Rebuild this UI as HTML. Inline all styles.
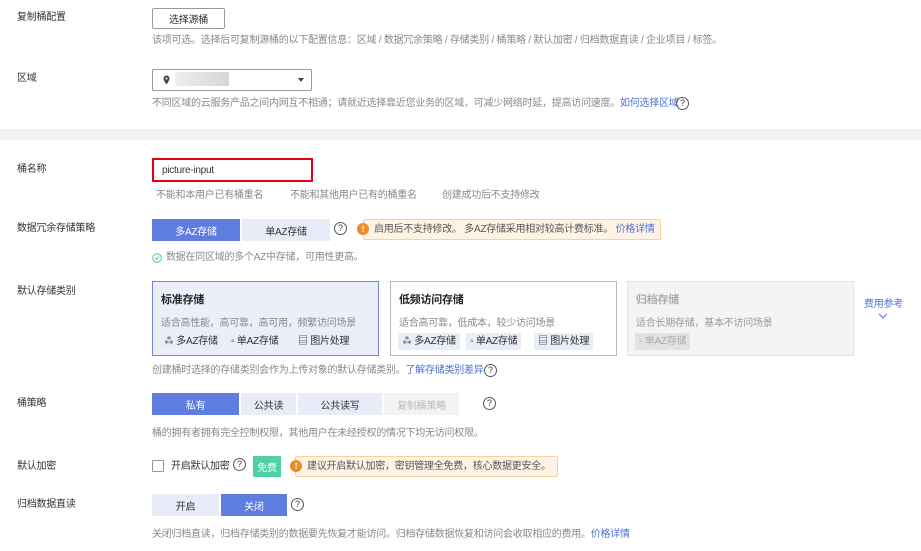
<!DOCTYPE html><html><head><meta charset="utf-8"><style>
*{margin:0;padding:0;box-sizing:border-box}
body{width:921px;height:551px;background:#fff;font-family:"Liberation Sans","Noto Sans CJK SC",sans-serif;font-size:10px;color:#333;position:relative;overflow:hidden;letter-spacing:-0.25px}
.a{position:absolute;white-space:nowrap;line-height:12px}
.lbl{left:17px;color:#333}
.hint{color:#888}
.lnk{color:#4d6fd6}
.btn{position:absolute;display:flex;align-items:center;justify-content:center;font-size:10px}
.blue{background:#5f7de0;color:#fff}
.lt{background:#e8ecf8;color:#333}
.dis{background:#f3f3f3;color:#bbb}
.q{position:absolute;width:13px;height:13px;border:1.2px solid #555;border-radius:50%;font-size:9px;line-height:11px;text-align:center;color:#444;letter-spacing:0}
.card{position:absolute;top:281px;height:75px;width:227px;border:1px solid #bbb;background:#fff}
.card .t{position:absolute;left:8px;top:9px;font-size:11px;font-weight:bold;color:#222}
.card .d{position:absolute;left:8px;top:32px;color:#888}
.chip{position:absolute;top:51px;height:17px;background:#e9edf8;color:#333;padding:0 4px;line-height:17px}
.warn{position:absolute;background:#fff3e6;border:1px solid #fbcfa0;border-radius:2px}
.wi{position:absolute;width:12px;height:12px;border-radius:50%;background:#f08a24;color:#fff;font-size:9px;font-weight:bold;text-align:center;line-height:12px}
</style></head><body>
<div class="a lbl" style="top:12px">复制桶配置</div>
<div class="btn" style="left:152px;top:8px;width:73px;height:21px;border:1px solid #999;border-radius:2px;background:#fff">选择源桶</div>
<div class="a hint" style="left:152px;top:35px">该项可选。选择后可复制源桶的以下配置信息：区域 / 数据冗余策略 / 存储类别 / 桶策略 / 默认加密 / 归档数据直读 / 企业项目 / 标签。</div>

<div class="a lbl" style="top:73px">区域</div>
<div style="position:absolute;left:152px;top:69px;width:160px;height:22px;border:1px solid #999;border-radius:2px;background:#fff"></div>
<svg style="position:absolute;left:163px;top:75px" width="7" height="10" viewBox="0 0 7 10"><path d="M3.5 0.5a3 3 0 0 1 3 3c0 2-3 6-3 6s-3-4-3-6a3 3 0 0 1 3-3z" fill="#444"/><circle cx="3.5" cy="3.5" r="1" fill="#fff"/></svg>
<div style="position:absolute;left:175px;top:72px;width:54px;height:14px;background:linear-gradient(90deg,#eee,#d6d6d6)"></div>
<div style="position:absolute;left:298px;top:78px;border-left:3.5px solid transparent;border-right:3.5px solid transparent;border-top:4px solid #444"></div>
<div class="a hint" style="left:152px;top:98px">不同区域的云服务产品之间内网互不相通；请就近选择靠近您业务的区域，可减少网络时延，提高访问速度。<span class="lnk">如何选择区域</span></div>
<div class="q" style="left:676px;top:97px">?</div>

<div style="position:absolute;left:0;top:129px;width:921px;height:11px;background:#f0f1f5"></div>

<div class="a lbl" style="top:164px">桶名称</div>
<div style="position:absolute;left:152px;top:158px;width:161px;height:24px;border:2px solid #e60012;background:#fff"></div>
<div class="a" style="left:162px;top:165px;color:#333">picture-input</div>
<div class="a hint" style="left:156px;top:190px">不能和本用户已有桶重名</div>
<div class="a hint" style="left:290px;top:190px">不能和其他用户已有的桶重名</div>
<div class="a hint" style="left:442px;top:190px">创建成功后不支持修改</div>

<div class="a lbl" style="top:223px">数据冗余存储策略</div>
<div class="btn blue" style="left:152px;top:219px;width:88px;height:22px">多AZ存储</div>
<div class="btn lt" style="left:242px;top:219px;width:88px;height:22px">单AZ存储</div>
<div class="q" style="left:334px;top:222px">?</div>
<div class="warn" style="left:363px;top:219px;width:298px;height:21px"></div>
<div class="wi" style="left:357px;top:223px">!</div>
<div class="a" style="left:374px;top:224px;color:#555">启用后不支持修改。 多AZ存储采用相对较高计费标准。 <span class="lnk">价格详情</span></div>
<svg style="position:absolute;left:152px;top:253px" width="10" height="10" viewBox="0 0 10 10"><circle cx="5" cy="5" r="4.3" fill="none" stroke="#4fc99a" stroke-width="1"/><path d="M3 5l1.5 1.5L7 3.8" fill="none" stroke="#4fc99a" stroke-width="1"/></svg>
<div class="a hint" style="left:166px;top:252px">数据在同区域的多个AZ中存储，可用性更高。</div>

<div class="a lbl" style="top:286px">默认存储类别</div>
<div class="card" style="left:152px;border-color:#6f88dc;background:#eceffa"><div class="t">标准存储</div><div class="d">适合高性能，高可靠，高可用，频繁访问场景</div>
<div class="chip" style="left:7px">⁂ 多AZ存储</div><div class="chip" style="left:74px">◦ 单AZ存储</div><div class="chip" style="left:141px">▤ 图片处理</div></div>
<div class="card" style="left:390px"><div class="t">低频访问存储</div><div class="d">适合高可靠，低成本，较少访问场景</div>
<div class="chip" style="left:7px">⁂ 多AZ存储</div><div class="chip" style="left:75px">◦ 单AZ存储</div><div class="chip" style="left:143px">▤ 图片处理</div></div>
<div class="card" style="left:627px;border-color:#e3e3e3;background:#f4f4f4"><div class="t" style="color:#aaa">归档存储</div><div class="d" style="color:#999">适合长期存储，基本不访问场景</div>
<div class="chip" style="left:7px;background:#e2e2e2;color:#aaa">◦ 单AZ存储</div></div>
<div class="a lnk" style="left:864px;top:299px">费用参考</div>
<svg style="position:absolute;left:878px;top:313px" width="10" height="6" viewBox="0 0 10 6"><path d="M1 1l4 4 4-4" fill="none" stroke="#4d6fd6" stroke-width="1"/></svg>
<div class="a hint" style="left:152px;top:365px">创建桶时选择的存储类别会作为上传对象的默认存储类别。<span class="lnk">了解存储类别差异</span></div>
<div class="q" style="left:484px;top:364px">?</div>

<div class="a lbl" style="top:398px">桶策略</div>
<div class="btn blue" style="left:152px;top:393px;width:87px;height:22px">私有</div>
<div class="btn lt" style="left:241px;top:393px;width:55px;height:22px">公共读</div>
<div class="btn lt" style="left:298px;top:393px;width:84px;height:22px">公共读写</div>
<div class="btn dis" style="left:384px;top:393px;width:75px;height:22px">复制桶策略</div>
<div class="q" style="left:483px;top:397px">?</div>
<div class="a hint" style="left:152px;top:428px">桶的拥有者拥有完全控制权限，其他用户在未经授权的情况下均无访问权限。</div>

<div class="a lbl" style="top:461px">默认加密</div>
<div style="position:absolute;left:152px;top:460px;width:12px;height:12px;border:1px solid #999;border-radius:1px;background:#fff"></div>
<div class="a" style="left:171px;top:461px;color:#333">开启默认加密</div>
<div class="q" style="left:233px;top:458px">?</div>
<div class="btn" style="left:253px;top:456px;width:28px;height:21px;background:#4fd1a6;color:#fff">免费</div>
<div class="warn" style="left:295px;top:456px;width:263px;height:21px"></div>
<div class="wi" style="left:290px;top:460px">!</div>
<div class="a" style="left:307px;top:461px;color:#555">建议开启默认加密，密钥管理全免费，核心数据更安全。</div>

<div class="a lbl" style="top:499px">归档数据直读</div>
<div class="btn lt" style="left:152px;top:494px;width:67px;height:22px">开启</div>
<div class="btn blue" style="left:221px;top:494px;width:66px;height:22px">关闭</div>
<div class="q" style="left:291px;top:498px">?</div>
<div class="a hint" style="left:152px;top:529px">关闭归档直读，归档存储类别的数据要先恢复才能访问。归档存储数据恢复和访问会收取相应的费用。<span class="lnk">价格详情</span></div>
</body></html>
